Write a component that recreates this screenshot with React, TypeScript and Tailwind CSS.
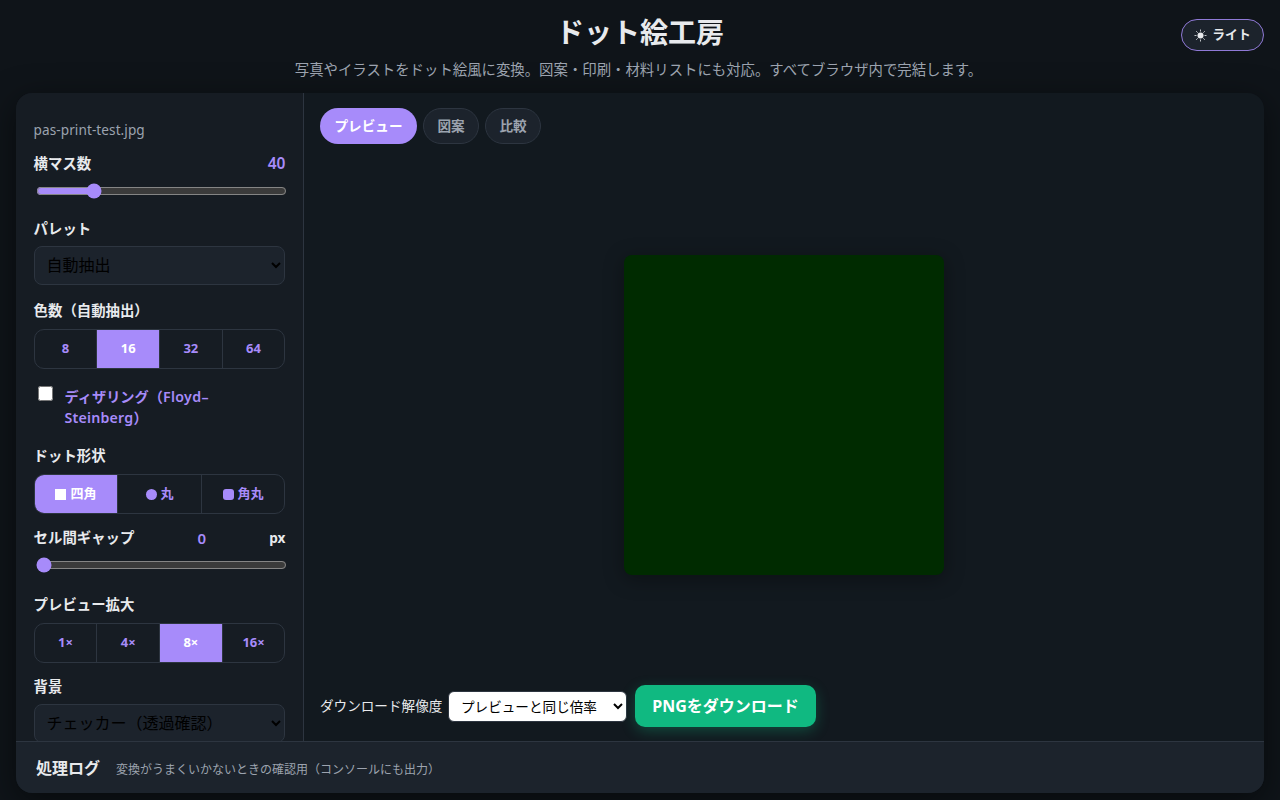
import type { ReactNode } from "react";

const label = "flex items-center justify-between h-[22px] text-[14.4px] font-bold text-[#e8eaed]";
const darkSelect =
  "block w-full h-[39px] rounded-lg border border-[#2d3540] bg-[#1c232c] pl-2 pb-px text-base text-black";

function SunIcon() {
  return (
    <svg width="13" height="13" viewBox="0 0 13 13" fill="none" stroke="currentColor" strokeWidth="0.8">
      <circle cx="6.5" cy="6.5" r="3" fill="currentColor" stroke="none" />
      <path d="M6.5 0.5v2M6.5 10.5v2M0.5 6.5h2M10.5 6.5h2M2.2 2.2l1.5 1.5M9.3 9.3l1.5 1.5M2.2 10.8l1.5-1.5M9.3 3.7l1.5-1.5" />
    </svg>
  );
}

function Segments({ items, active }: { items: ReactNode[]; active: number }) {
  return (
    <div className="flex h-10 overflow-hidden rounded-[10px] border border-[#2d3540]">
      {items.map((item, i) => (
        <button
          key={i}
          className={
            "flex flex-1 items-center justify-center gap-1 border-[#2d3540] text-[13px] font-bold " +
            (i < items.length - 1 ? "border-r " : "") +
            (i === active ? "bg-[#a78bfa] text-white" : "text-[#a78bfa]")
          }
        >
          {item}
        </button>
      ))}
    </div>
  );
}

function Slider({ value, max, min = 0 }: { value: number; max: number; min?: number }) {
  return (
    <input
      type="range"
      min={min}
      max={max}
      defaultValue={value}
      className="m-0.5 block h-4 w-full shrink-0 accent-[#a78bfa]"
    />
  );
}

export default function App() {
  return (
    <div className="flex h-[800px] flex-col overflow-hidden bg-[#0f1419] px-4 font-['Noto_Sans','Noto_Sans_CJK_JP',sans-serif] text-[#e8eaed]">
      <header className="relative h-[93px] shrink-0 text-center">
        <h1 className="pt-[12px] text-[28px] leading-[40px] font-bold">ドット絵工房</h1>
        <p className="mt-[7px] pr-[3px] text-[14.4px] leading-[22px] text-[#9ca3af]">
          写真やイラストをドット絵風に変換。図案・印刷・材料リストにも対応。すべてブラウザ内で完結します。
        </p>
        <button className="absolute top-[19px] right-0 flex h-8 w-[83px] items-center justify-center gap-[5px] rounded-full border border-[#8f79d6] bg-[#1c232c] text-[12.8px] font-bold">
          <SunIcon />
          <span>ライト</span>
        </button>
      </header>

      <div className="flex h-[700px] shrink-0 flex-col overflow-hidden rounded-[16px] bg-[#12191f] shadow-[0_8px_32px_rgba(0,0,0,0.5)]">
        <div className="flex h-[648px] shrink-0">
          <aside className="flex h-full w-72 shrink-0 flex-col overflow-hidden border-r border-[#2d3540] bg-[#161c23] px-[17.6px]">
            <div className="mt-[26px] h-[22px] shrink-0 text-[13.6px] leading-[22px] tracking-[0.07px] text-[#9ca3af]">
              pas-print-test.jpg
            </div>
            <div className="mt-3 shrink-0">
              <div className={label}>
                <span>横マス数</span>
                <span className="text-[15.5px] font-semibold text-[#a78bfa]">40</span>
              </div>
              <div className="mt-2 h-5">
                <Slider min={16} max={128} value={40} />
              </div>
            </div>
            <div className="mt-[15px] shrink-0">
              <div className={label}>パレット</div>
              <select className={darkSelect + " mt-[6px]"}>
                <option>自動抽出</option>
              </select>
            </div>
            <div className="mt-[15px] shrink-0">
              <div className={label}>色数（自動抽出）</div>
              <div className="mt-[7px]">
                <Segments items={["8", "16", "32", "64"]} active={1} />
              </div>
            </div>
            <label className="mt-[17px] flex h-[42px] shrink-0 items-start text-[14.2px] leading-[21px] font-semibold text-[#a78bfa]">
              <input type="checkbox" className="mt-0 mr-[12px] ml-[4px] size-[15px] shrink-0" />
              <span>
                ディザリング（<span className="tracking-[0.35px]">Floyd–</span>
                <br />
                <span className="tracking-[0.2px]">Steinberg</span>）
              </span>
            </label>
            <div className="mt-[17px] shrink-0">
              <div className={label}>ドット形状</div>
              <div className="mt-[7px]">
                <Segments
                  active={0}
                  items={[
                    <>
                      <i className="size-[11px] bg-current" />
                      <span className="pb-px">四角</span>
                    </>,
                    <>
                      <i className="size-[11px] rounded-full bg-current" />
                      <span className="pb-px">丸</span>
                    </>,
                    <>
                      <i className="size-[11px] rounded-[3px] bg-current" />
                      <span className="pb-px">角丸</span>
                    </>,
                  ]}
                />
              </div>
            </div>
            <div className="mt-[13px] shrink-0">
              <div className={label}>
                <span>セル間ギャップ</span>
                <span className="text-[15px] font-semibold text-[#a78bfa]">0</span>
                <span className="text-[13.6px]">px</span>
              </div>
              <div className="mt-2 h-5">
                <Slider max={4} value={0} />
              </div>
            </div>
            <div className="mt-[17px] shrink-0">
              <div className={label}>プレビュー拡大</div>
              <div className="mt-[7px]">
                <Segments items={["1×", "4×", "8×", "16×"]} active={2} />
              </div>
            </div>
            <div className="mt-[13px] shrink-0">
              <div className={label}>背景</div>
              <select className={darkSelect + " mt-[6px]"}>
                <option>チェッカー（透過確認）</option>
              </select>
            </div>
          </aside>

          <main className="flex flex-1 flex-col px-4 pt-[15px] pb-[14px]">
            <nav className="flex h-9 gap-1.5 text-[13.6px] font-bold">
              <button className="w-[97px] rounded-full bg-[#a78bfa] text-white">プレビュー</button>
              <button className="w-14 rounded-full border border-[#2d3540] bg-[#1c232c] text-[#9ca3af]">図案</button>
              <button className="w-14 rounded-full border border-[#2d3540] bg-[#1c232c] text-[#9ca3af]">比較</button>
            </nav>
            <div className="flex flex-1 items-center justify-center">
              <div className="size-80 rounded-lg bg-[#002b00] shadow-[0_4px_20px_rgba(0,0,0,0.35)]" />
            </div>
            <div className="flex h-[42px] items-center text-[13.6px]">
              <span className="w-[128px] whitespace-nowrap">ダウンロード解像度</span>
              <select className="h-[31px] w-[179px] rounded-md border border-[#2d3540] bg-white pl-2 text-black">
                <option>プレビューと同じ倍率</option>
              </select>
              <button className="ml-2 h-[42px] w-[181px] rounded-[10px] bg-[#10b981] text-base font-bold whitespace-nowrap text-white shadow-[0_4px_14px_rgba(16,185,129,0.3)]">
                PNGをダウンロード
              </button>
            </div>
          </main>
        </div>
        <footer className="flex h-[52px] items-center border-t border-[#2d3540] bg-[#1c232c] px-5">
          <strong className="text-base">処理ログ</strong>
          <span className="ml-4 pt-1 text-xs text-[#9ca3af]">
            変換がうまくいかないときの確認用（コンソールにも出力）
          </span>
        </footer>
      </div>
    </div>
  );
}
